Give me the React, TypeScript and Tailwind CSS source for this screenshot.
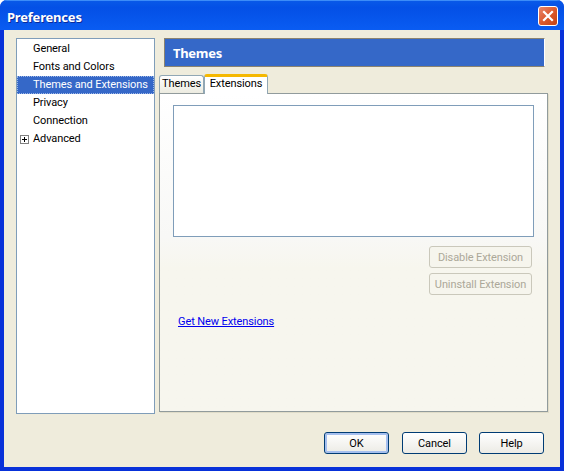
const font = "font-['Roboto',sans-serif] text-[11px] tracking-[-0.1px]";

function NavItem({ label, selected }: { label: string; selected?: boolean }) {
  return (
    <div
      className={
        selected
          ? 'h-[18px] pl-4 flex items-center whitespace-nowrap bg-[#3568c8] text-white outline-1 -outline-offset-1 outline-dotted outline-[#9db6e6]'
          : 'h-[18px] pl-4 flex items-center whitespace-nowrap text-black'
      }
    >
      {label}
    </div>
  );
}

function XpButton({ label, isDefault }: { label: string; isDefault?: boolean }) {
  return (
    <button
      className={
        isDefault
          ? 'w-[65px] h-[22px] pt-[2px] rounded-[3px] border border-[#003c74] bg-gradient-to-b from-[#ffffff] to-[#ecebe5] shadow-[inset_0_0_0_2px_#a5bfee] text-black'
          : 'w-[65px] h-[22px] pt-[2px] rounded-[3px] border border-[#003c74] bg-gradient-to-b from-[#ffffff] to-[#ecebe5] text-black'
      }
    >
      {label}
    </button>
  );
}

function DisabledButton({ label }: { label: string }) {
  return (
    <button className="w-[103px] h-[22px] pt-[2px] rounded-[3px] border border-[#cac8bb] bg-[#f6f5ed] text-[#aca899] whitespace-nowrap">
      {label}
    </button>
  );
}

export default function App() {
  return (
    <div className={`w-[564px] h-[471px] flex flex-col overflow-hidden rounded-t-[7px] bg-[#0831d9] ${font}`}>
      <div className="h-[30px] shrink-0 flex items-start justify-between pl-[7px] pr-[6px] bg-gradient-to-b from-[#0a5ae8] via-[#0450e6] via-25% to-[#0a5cf2] shadow-[inset_0_1px_0_#3c8cf8]">
        <span className="mt-[8px] font-['Noto_Sans',sans-serif] text-[13px] leading-[18px] tracking-[-0.2px] font-bold text-white [text-shadow:1px_1px_0_#0b2a9a]">Preferences</span>
        <div className="mt-[6px] w-[20px] h-[20px] rounded-[3px] border border-white bg-gradient-to-br from-[#e8866a] via-[#dc5a2e] to-[#c2420f] flex items-center justify-center">
          <svg width="12" height="12" viewBox="0 0 12 12">
            <path d="M2 2 L10 10 M10 2 L2 10" stroke="white" strokeWidth="2.2" strokeLinecap="square" fill="none" />
          </svg>
        </div>
      </div>

      <div className="flex-1 mx-[4px] mb-[4px] bg-[#efecdc] flex flex-col pl-[12px] pt-[8px]">
        <div className="flex gap-[4px]">
          <div className="w-[139px] h-[376px] border border-[#7f9db9] bg-white py-px">
            <NavItem label="General" />
            <NavItem label="Fonts and Colors" />
            <NavItem label="Themes and Extensions" selected />
            <NavItem label="Privacy" />
            <NavItem label="Connection" />
            <div className="relative">
              <NavItem label="Advanced" />
              <div className="absolute left-[3px] top-[5px] w-[9px] h-[9px] border border-[#808080] bg-white flex items-center justify-center">
                <svg width="7" height="7" viewBox="0 0 7 7">
                  <path d="M1 3.5 H6 M3.5 1 V6" stroke="black" strokeWidth="1" fill="none" />
                </svg>
              </div>
            </div>
          </div>

          <div className="w-[389px] flex flex-col">
            <div className="ml-[5px] w-[381px] h-[29px] pt-[2px] flex items-center pl-[8px] bg-[#3568c8] border-t border-l border-t-[#8a8370] border-l-[#8a8370] border-b border-r border-b-[#8a8370] border-r-white text-white font-['Noto_Sans',sans-serif] font-bold text-[13px] tracking-[-0.3px]">
              Themes
            </div>

            <div className="h-[20px] mt-[6px] flex items-end relative z-10">
              <div className="h-[18px] w-[45px] flex items-center justify-center rounded-t-[3px] border border-b-0 border-[#91a7b4] bg-gradient-to-b from-white to-[#ecebe0] text-black">
                Themes
              </div>
              <div className="h-[20px] w-[64px] -mb-px flex items-center justify-center rounded-t-[3px] border-x border-x-[#91a7b4] border-t-[3px] border-t-[#f5b800] bg-white text-black pb-[3px]">
                Extensions
              </div>
            </div>

            <div className="h-[319px] border border-[#919b9c] shadow-[1px_1px_0_#e0dcc8] bg-gradient-to-b from-white via-[#f8f8f6] via-45% to-[#f7f6ee] to-55% px-[13px] pt-[11px] flex flex-col">
              <div className="w-[361px] h-[132px] border border-[#7f9db9] bg-white" />
              <div className="w-[361px] mt-[9px] flex flex-col items-end gap-[5px] pr-[2px]">
                <DisabledButton label="Disable Extension" />
                <DisabledButton label="Uninstall Extension" />
              </div>
              <a className="mt-[19px] ml-[5px] text-[#0000ee] underline cursor-pointer">Get New Extensions</a>
            </div>
          </div>
        </div>

        <div className="flex mt-[18px] pl-[308px] gap-[13px]">
          <XpButton label="OK" isDefault />
          <XpButton label="Cancel" />
          <div className="-ml-[1px]">
            <XpButton label="Help" />
          </div>
        </div>
      </div>
    </div>
  );
}
